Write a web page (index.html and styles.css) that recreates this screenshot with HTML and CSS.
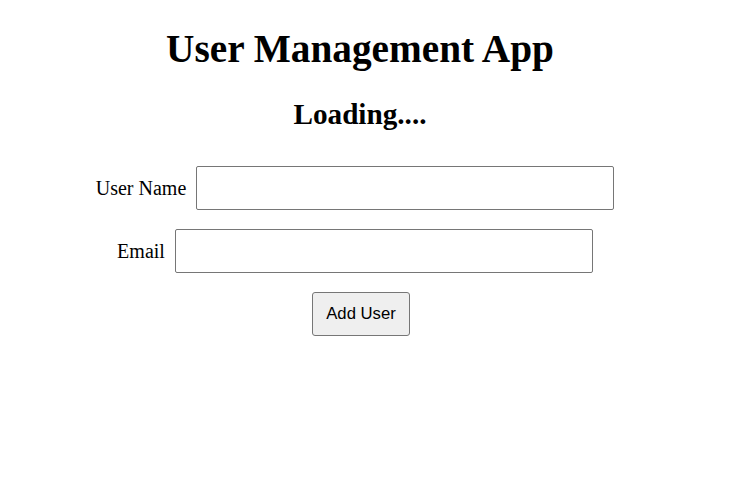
FILE: index.html
```html
<!DOCTYPE html>
<html>
<head>
<meta charset="utf-8">
<link rel="stylesheet" href="styles.css">
</head>
<body>
<div class="app">
  <h1 class="title">User Management App</h1>
  <h2 class="status">Loading....</h2>
  <form class="user-form">
    <div class="row">
      <label class="label" for="name">User Name</label>
      <input class="field" id="name" type="text">
    </div>
    <div class="row">
      <label class="label" for="email">Email</label>
      <input class="field" id="email" type="text">
    </div>
    <button class="btn" type="button">Add User</button>
  </form>
</div>
</body>
</html>
```
FILE: styles.css
```css
html, body {
  margin: 0;
  padding: 0;
  background: #fff;
}
body {
  font-family: "Liberation Serif", "Times New Roman", serif;
  color: #000;
}
.app {
  padding-right: 24px;
  text-align: center;
  display: flex;
  flex-direction: column;
  align-items: center;
}
.title {
  font-size: 39.3px;
  font-weight: bold;
  margin: 26px 0 0;
  line-height: normal;
}
.status {
  font-size: 29.2px;
  font-weight: bold;
  margin: 26px 0 0;
  line-height: normal;
}
.user-form {
  margin-top: 35px;
  display: flex;
  flex-direction: column;
  align-items: center;
  gap: 19px;
}
.row {
  display: flex;
  align-items: center;
  gap: 10px;
  padding-right: 10px;
}
.label {
  font-size: 20px;
}
.field {
  box-sizing: border-box;
  width: 418px;
  height: 44px;
  margin: 0;
  border: 1px solid #767676;
  border-radius: 2px;
  background: #fff;
  font-size: 16px;
  padding: 0 6px;
}
.btn {
  box-sizing: border-box;
  width: 98px;
  height: 44px;
  margin: 0 0 0 2px;
  border: 1px solid #767676;
  border-radius: 3px;
  background: #efefef;
  color: #000;
  font-family: "Liberation Sans", Arial, sans-serif;
  font-size: 16.7px;
  padding: 0;
}
```
